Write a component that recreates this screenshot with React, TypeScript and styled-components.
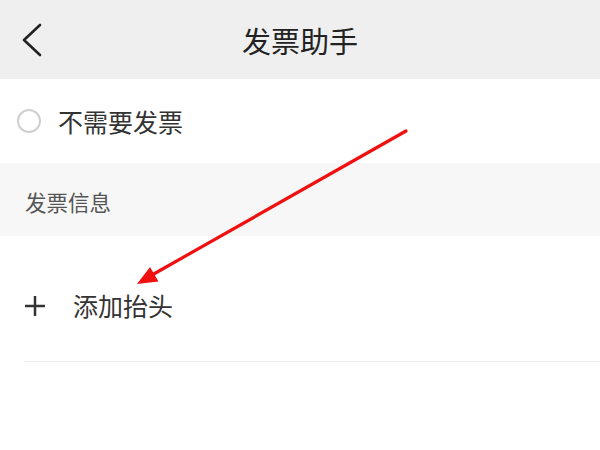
import styled, { createGlobalStyle } from 'styled-components';

const GlobalStyle = createGlobalStyle`
  html, body {
    margin: 0;
    padding: 0;
    background: #fff;
  }
  body {
    font-family: "Noto Sans CJK SC", "Noto Sans", sans-serif;
  }
`;

const Page = styled.div`
  position: relative;
  width: 600px;
  height: 450px;
  overflow: hidden;
  background: #fff;
`;

const Header = styled.header`
  display: grid;
  grid-template-columns: 1fr auto 1fr;
  align-items: center;
  height: 79px;
  background: #efefef;
`;

const BackButton = styled.div`
  display: flex;
  align-items: center;
  padding-left: 21px;
  padding-top: 1px;
`;

const Title = styled.h1`
  margin: 0;
  font-size: 29px;
  font-weight: 400;
  color: #222;
  line-height: 1;
  padding-top: 1px;
`;

const OptionRow = styled.div`
  display: flex;
  align-items: center;
  gap: 17px;
  height: 84px;
  padding-left: 17px;
`;

const Radio = styled.span`
  box-sizing: border-box;
  width: 24px;
  height: 24px;
  border-radius: 50%;
  border: 2px solid #cfcfcf;
`;

const RowText = styled.span`
  font-size: 25px;
  color: #333;
  line-height: 1;
`;

const Section = styled.div`
  display: flex;
  align-items: center;
  box-sizing: border-box;
  height: 73px;
  padding: 4px 0 0 25px;
  background: #f7f7f7;
  font-size: 21.5px;
  color: #555;
`;

const AddRow = styled.div`
  display: flex;
  align-items: center;
  gap: 28px;
  box-sizing: border-box;
  height: 125px;
  padding: 14px 0 0 25px;
`;

const Divider = styled.div`
  margin-left: 24px;
  height: 1px;
  background: #ececec;
`;

const Annotation = styled.svg`
  position: absolute;
  left: 0;
  top: 0;
  pointer-events: none;
`;

export default function App() {
  return (
    <>
      <GlobalStyle />
      <Page>
        <Header>
          <BackButton>
            <svg width="22" height="34" viewBox="0 0 22 34">
              <polyline points="19,2 3,17 19,32" fill="none" stroke="#222" strokeWidth="2.6" strokeLinecap="round" strokeLinejoin="round" />
            </svg>
          </BackButton>
          <Title>发票助手</Title>
          <div />
        </Header>
        <OptionRow>
          <Radio />
          <RowText>不需要发票</RowText>
        </OptionRow>
        <Section>发票信息</Section>
        <AddRow>
          <svg width="20" height="20" viewBox="0 0 20 20">
            <path d="M0 10H20M10 0V20" stroke="#333" strokeWidth="2.5" />
          </svg>
          <RowText>添加抬头</RowText>
        </AddRow>
        <Divider />
        <Annotation width="600" height="450" viewBox="0 0 600 450">
          <line x1="406" y1="131" x2="152" y2="275" stroke="#f01010" strokeWidth="3.2" strokeLinecap="round" />
          <polygon points="137,284 158.5,281.5 150,267" fill="#f01010" />
        </Annotation>
      </Page>
    </>
  );
}
